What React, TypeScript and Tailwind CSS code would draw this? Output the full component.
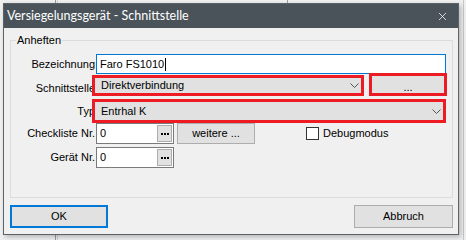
import { X } from "lucide-react";

const ui = { fontFamily: '"Liberation Sans", Arial, sans-serif' };

function Chevron() {
  return (
    <svg width="9" height="5" viewBox="0 0 9 5" className="shrink-0">
      <path d="M0.5 0.5 L4.5 4.5 L8.5 0.5" fill="none" stroke="#555" strokeWidth="1" />
    </svg>
  );
}

function DotsInput() {
  return (
    <div className="w-[78px] h-[21px] bg-white border border-[#7a7a7a] flex items-center justify-between pl-[3px] pr-[1px]">
      <span>0</span>
      <div className="w-[15px] h-[17px] bg-[#e1e1e1] border border-[#adadad] flex items-center justify-center gap-[1px]">
        <span className="w-[2px] h-[2px] bg-black" />
        <span className="w-[2px] h-[2px] bg-black" />
        <span className="w-[2px] h-[2px] bg-black" />
      </div>
    </div>
  );
}

function Label({ text }: { text: string }) {
  return (
    <div className="w-[85px] shrink-0 text-right pr-[1px] whitespace-nowrap">{text}</div>
  );
}

export default function App() {
  return (
    <div
      className="relative w-[466px] h-[240px] overflow-hidden bg-[#f0f0f0] text-[11px] text-black"
      style={ui}
    >
      {/* window behind */}
      <div className="absolute left-[55px] top-0 w-[1px] h-[240px] bg-[#9a9a9a]" />
      <div className="absolute left-[57px] top-0 w-[1px] h-[240px] bg-[#d4d4d4]" />
      <div className="absolute left-[287px] top-0 w-[1px] h-[4px] bg-[#a0a0a0]" />
      <div className="absolute left-[463px] top-0 w-[1px] h-[240px] bg-[#c8c8c8]" />

      {/* dialog */}
      <div className="absolute left-[3px] top-[3px] w-[456px] h-[232px] border border-[#5b6369] bg-[#f0f0f0] flex flex-col shadow-[2px_2px_5px_rgba(0,0,0,0.25)]">
        <div className="h-[24px] bg-[#4b535a] flex items-center justify-between pl-[3px] pr-[9px] text-white">
          <span className="text-[12.5px]" style={{ fontFamily: 'Lato, "Noto Sans", sans-serif' }}>
            Versiegelungsgerät - Schnittstelle
          </span>
          <X size={13} strokeWidth={1.4} />
        </div>

        <div className="flex-1 pl-[6px] pr-[5px]">
          <div className="relative mt-[12px] w-[443px] h-[158px] border border-[#dcdcdc] pt-[13px]">
            <span className="absolute -top-[7px] left-[5px] px-[1px] bg-[#f0f0f0] leading-[13px]">
              Anheften
            </span>

            <div className="flex items-center h-[20px]">
              <Label text="Bezeichnung" />
              <div className="w-[350px] h-[20px] bg-white border border-[#0078d7] flex items-center pl-[3px]">
                <span>Faro FS1010</span>
                <span className="w-[1px] h-[13px] bg-black ml-[1px]" />
              </div>
            </div>

            <div className="flex items-end h-[21px] mt-[1px]">
              <Label text="Schnittstelle" />
              <div className="relative z-10 -ml-[4px] w-[272px] h-[21px] border-[3px] border-[#ed1c24] bg-[#e1e1e1] flex items-center justify-between pl-[6px] pr-[2px]">
                <span>Direktverbindung</span>
                <Chevron />
              </div>
              <div className="relative z-10 ml-[5px] w-[78px] h-[23px] border-[3px] border-[#ed1c24] bg-[#e1e1e1] flex items-end justify-center pb-[1px] leading-[10px]">
                ...
              </div>
            </div>

            <div className="flex items-center h-[24px] mt-[3px]">
              <Label text="Typ" />
              <div className="relative z-10 -ml-[4px] w-[354px] h-[24px] border-[3px] border-[#ed1c24] bg-[#e1e1e1] flex items-center justify-between pl-[6px] pr-[2px]">
                <span>Entrhal K</span>
                <Chevron />
              </div>
            </div>

            <div className="flex items-center h-[21px]">
              <Label text="Checkliste Nr." />
              <DotsInput />
              <div className="ml-[3px] w-[78px] h-[21px] bg-[#e1e1e1] border border-[#adadad] flex items-center justify-center whitespace-nowrap">
                weitere ...
              </div>
              <div className="ml-[51px] w-[13px] h-[13px] bg-white border border-[#333]" />
              <span className="ml-[4px]">Debugmodus</span>
            </div>

            <div className="flex items-center h-[21px] mt-[3px]">
              <Label text="Gerät Nr." />
              <DotsInput />
            </div>
          </div>

          <div className="flex justify-between mt-[7px]">
            <div className="w-[98px] h-[23px] bg-[#e1e1e1] border-2 border-[#0078d7] flex items-center justify-center">
              OK
            </div>
            <div className="w-[99px] h-[23px] bg-[#e1e1e1] border border-[#adadad] flex items-center justify-center">
              Abbruch
            </div>
          </div>
        </div>
      </div>
    </div>
  );
}
